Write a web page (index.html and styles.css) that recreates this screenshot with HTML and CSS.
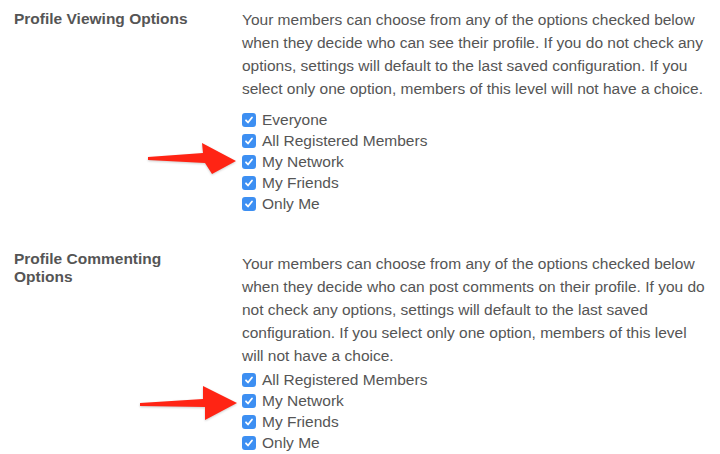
FILE: index.html
```html
<!DOCTYPE html>
<html lang="en">

<head>
    <meta charset="UTF-8">
    <meta name="viewport" content="width=device-width, initial-scale=1.0">
    <title>Privacy Settings</title>
    <link rel="stylesheet" href="styles.css">
</head>

<body>
    <div class="setting">
        <div class="setting-label">Profile Viewing Options</div>
        <div class="setting-body">
            <p class="desc">Your members can choose from any of the options checked below when they decide who can see their profile. If you do not check any options, settings will default to the last saved configuration. If you select only one option, members of this level will not have a choice.</p>
            <ul class="choices choices-wide">
                <li><span class="check"><svg viewBox="0 0 14 14"><path d="M4 7.3l2 2.2 4-5"/></svg></span>Everyone</li>
                <li><span class="check"><svg viewBox="0 0 14 14"><path d="M4 7.3l2 2.2 4-5"/></svg></span>All Registered Members</li>
                <li><span class="check"><svg viewBox="0 0 14 14"><path d="M4 7.3l2 2.2 4-5"/></svg></span>My Network</li>
                <li><span class="check"><svg viewBox="0 0 14 14"><path d="M4 7.3l2 2.2 4-5"/></svg></span>My Friends</li>
                <li><span class="check"><svg viewBox="0 0 14 14"><path d="M4 7.3l2 2.2 4-5"/></svg></span>Only Me</li>
                <svg class="arrow arrow-one" viewBox="0 0 96 40"><polygon points="2,18 57,14 56,4 90,22 66,35 59,24 2,21"/></svg>
            </ul>
        </div>
    </div>

    <div class="setting">
        <div class="setting-label setting-label-wrap">Profile Commenting Options</div>
        <div class="setting-body">
            <p class="desc">Your members can choose from any of the options checked below when they decide who can post comments on their profile. If you do not check any options, settings will default to the last saved configuration. If you select only one option, members of this level will not have a choice.</p>
            <ul class="choices">
                <li><span class="check"><svg viewBox="0 0 14 14"><path d="M4 7.3l2 2.2 4-5"/></svg></span>All Registered Members</li>
                <li><span class="check"><svg viewBox="0 0 14 14"><path d="M4 7.3l2 2.2 4-5"/></svg></span>My Network</li>
                <li><span class="check"><svg viewBox="0 0 14 14"><path d="M4 7.3l2 2.2 4-5"/></svg></span>My Friends</li>
                <li><span class="check"><svg viewBox="0 0 14 14"><path d="M4 7.3l2 2.2 4-5"/></svg></span>Only Me</li>
                <svg class="arrow arrow-two" viewBox="0 0 100 40"><polygon points="2,20 65,16 65,3 99,20 67,37 67,24 2,23"/></svg>
            </ul>
        </div>
    </div>
</body>

</html>
```

FILE: styles.css
```css
body {
    margin: 0;
    padding: 8px 10px 0 14px;
    background: #fff;
    color: #555;
    font-family: "Liberation Sans", Arial, sans-serif;
    font-size: 15.5px;
}

.setting {
    display: grid;
    grid-template-columns: 200px 468px;
    column-gap: 28px;
    margin-bottom: 38px;
}

.setting:last-child {
    margin-bottom: 0;
}

.setting-label {
    font-weight: bold;
    line-height: 18px;
    padding-top: 2px;
}

.setting-label-wrap {
    padding-top: 0;
    margin-top: -2px;
}

.desc {
    margin: 0;
    line-height: 23px;
}

.choices {
    position: relative;
    list-style: none;
    margin: 2px 0 0;
    padding: 0;
}

.choices-wide {
    margin-top: 9px;
}

.choices li {
    display: flex;
    align-items: center;
    height: 21px;
}

.check {
    display: inline-block;
    width: 14px;
    height: 14px;
    margin-right: 6px;
    border-radius: 3px;
    background: #3d8ff2;
}

.check svg {
    display: block;
    width: 14px;
    height: 14px;
}

.check path {
    fill: none;
    stroke: #fff;
    stroke-width: 1.8;
    stroke-linecap: round;
    stroke-linejoin: round;
}

.arrow {
    position: absolute;
    height: 40px;
    fill: #ff2414;
    filter: drop-shadow(0 1px 1px rgba(0, 0, 0, 0.2));
}

.arrow-one {
    left: -96px;
    top: 30px;
    width: 96px;
}

.arrow-two {
    left: -104px;
    top: 14px;
    width: 100px;
}
```
